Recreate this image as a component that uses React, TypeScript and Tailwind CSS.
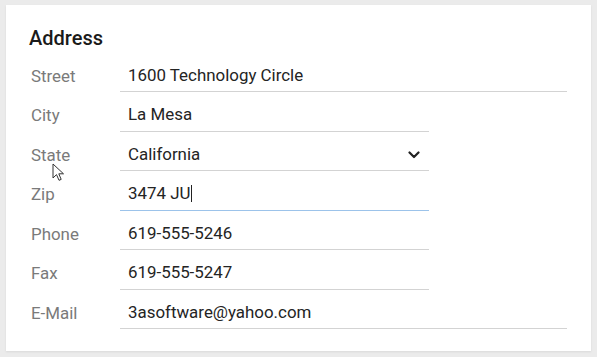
import React from "react";

const rows: { label: string; value: string; wide?: boolean; select?: boolean; focus?: boolean }[] = [
  { label: "Street", value: "1600 Technology Circle", wide: true },
  { label: "City", value: "La Mesa" },
  { label: "State", value: "California", select: true },
  { label: "Zip", value: "3474 JU", focus: true },
  { label: "Phone", value: "619-555-5246" },
  { label: "Fax", value: "619-555-5247" },
  { label: "E-Mail", value: "3asoftware@yahoo.com", wide: true },
];

export default function App() {
  return (
    <div className="w-[597px] h-[357px] bg-[#ebebeb] pt-[5px] pl-[6px] overflow-hidden" style={{ fontFamily: "Roboto, 'Noto Sans', sans-serif" }}>
      <div className="relative w-[585px] h-[346px] bg-white pt-[19px] pl-[23px] shadow-[0_1px_2px_rgba(0,0,0,0.08)]">
        <div className="h-[28.5px] text-[20px] leading-[28px] font-medium text-[#1a1a1a]">Address</div>
        {rows.map((r) => (
          <div key={r.label} className="flex h-[39.5px]">
            <div className="w-[91px] flex items-end pb-[1.5px] pl-[2px]">
              <span className="text-[16.9px] leading-[24px] text-[#7a7a7a] translate-y-[-3px]">{r.label}</span>
            </div>
            <div
              className={
                (r.wide ? "w-[447px] " : "w-[309px] ") +
                (r.focus ? "border-[#9cc3ea] " : "border-[#d3d3d3] ") +
                "flex items-end justify-between border-b pb-[1.5px] pl-[8px] pr-[8px]"
              }
            >
              <span className="text-[16.9px] leading-[24px] text-[#242424] translate-y-[-3px] flex items-center">
                {r.value}
                {r.focus && <span className="inline-block w-px h-[17px] bg-[#222] ml-[1px]" />}
              </span>
              {r.select && (
                <svg width="12" height="8" viewBox="0 0 12 8" className="mb-[10px] mr-[1px]">
                  <polyline points="1.5,1.5 6,6 10.5,1.5" fill="none" stroke="#222" strokeWidth="2.2" strokeLinecap="round" strokeLinejoin="round" />
                </svg>
              )}
            </div>
          </div>
        ))}
        <svg width="13" height="19" viewBox="0 0 13 19" className="absolute left-[46px] top-[158px]">
          <path d="M1 1 L1 15 L4.5 11.6 L7 17.3 L9.2 16.4 L6.8 10.8 L11.5 10.8 Z" fill="#fff" stroke="#333" strokeWidth="1" strokeLinejoin="round" />
        </svg>
      </div>
    </div>
  );
}
